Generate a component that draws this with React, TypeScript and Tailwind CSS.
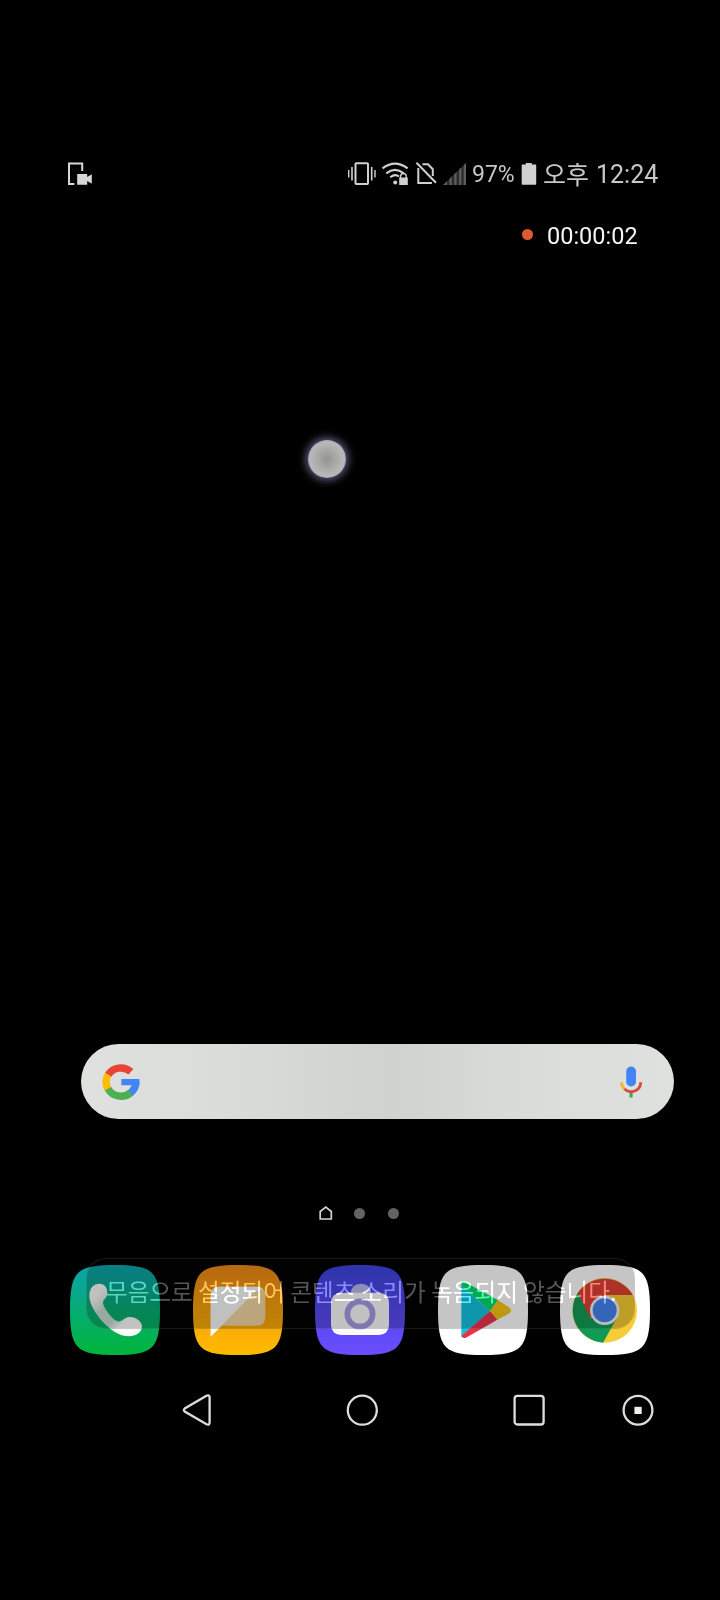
import React from "react";

const SQUIRCLE =
  "M45 0 C63 0 75.500 1.500 82 8 C88.500 14.500 90 27 90 45 C90 63 88.500 75.500 82 82 C75.500 88.500 63 90 45 90 C27 90 14.500 88.500 8 82 C1.500 75.500 0 63 0 45 C0 27 1.500 14.500 8 8 C14.500 1.500 27 0 45 0Z";

function AppIcon({ x, id, top, bottom, children }: { x: number; id: string; top: string; bottom: string; children: React.ReactNode }) {
  return (
    <svg className="h-[90px] w-[90px] shrink-0" viewBox={`${x} 45 270 270`}>
      <defs>
        <linearGradient id={id} x1="0" y1="0" x2="0" y2="1">
          <stop offset="0" stopColor={top} />
          <stop offset="1" stopColor={bottom} />
        </linearGradient>
      </defs>
      <path d={SQUIRCLE} transform={`translate(${x} 45) scale(3)`} fill={`url(#${id})`} />
      {children}
    </svg>
  );
}

function StatusBar() {
  return (
    <header className="flex h-[24px] items-center pl-[68px]">
      <svg className="h-6 w-6 shrink-0" viewBox="0 0 24 24">
        <path d="M14.2 9V1.6H1V21.9H6.4" fill="none" stroke="#d6d8d6" strokeWidth="2" />
        <path d="M9.2 12h10v3l4.6-2.8v9.6L19.200 19v3.800h-10z" fill="#d6d8d6" />
      </svg>
      <svg className="ml-[255px] h-6 w-[120px] shrink-0" viewBox="347 162 120 24">
        <g fill="none" stroke="#cfd1cf" strokeWidth="2">
          <rect x="355.500" y="163.300" width="12.500" height="20.700" rx="0.8" strokeWidth="2" />
          <path d="M352 167v13.500M371.700 167v13.500" strokeWidth="1.600" />
          <path d="M348.700 170v7.500M375 170v7.500" strokeWidth="1.400" />
          <path d="M382.500 168.400Q395 158.800 407.600 168.400M386.300 173.300Q395 166.500 403.700 173.300" strokeWidth="2.200" />
          <path d="M390.300 177.300Q395 173.500 399 176.500" strokeWidth="2.100" />
          <path d="M400.600 178.500v-2.200a2.800 2.800 0 0 1 5.600 0v2.200" strokeWidth="1.400" />
          <path d="M416.500 162.800L436 182.800M422.500 164.200h5.500l4.800 5v6.800M418.300 168v14.900h13.600" strokeWidth="2" />
        </g>
        <circle cx="395.200" cy="182.500" r="2" fill="#cfd1cf" />
        <rect x="399.200" y="177.500" width="8.600" height="7.500" fill="#cfd1cf" />
        <path d="M443 185L466 163V185Z" fill="#2a2b2a" />
        <path d="M443 185l4-3.800v3.800zM449.500 185v-6.200l2.300-2.200v8.400zM454.300 185v-10.800l2.300-2.200v13zM459.100 185v-15.400l2.300-2.200v17.600zM463.700 185v-19.800l2.300-2.200v22z" fill="#5c5e5c" />
      </svg>
      <span className="relative top-px ml-[5px] w-[45px] whitespace-nowrap font-['Roboto',sans-serif] text-[23px] leading-6 text-[#c6c8c6]">97%</span>
      <svg className="ml-[4px] h-6 w-4 shrink-0" viewBox="0 0 16 24">
        <path d="M4.800 1h6v1.500H14.500a.7.7 0 0 1 .7.7V22a.8.8 0 0 1-.8.8H1.500a.8.8 0 0 1-.8-.8V3.200a.7.7 0 0 1 .7-.7H4.800z" fill="#cfd1cf" />
      </svg>
      <span className="relative -top-px ml-[6px] w-[53px] whitespace-nowrap font-['Noto_Sans_CJK_KR',sans-serif] text-[25px] leading-6 text-[#c6c8c6]">오후</span>
      <span className="relative top-px whitespace-nowrap font-['Roboto',sans-serif] text-[25px] leading-6 text-[#c6c8c6]">12:24</span>
    </header>
  );
}

function SearchBar() {
  return (
    <div className="ml-[81px] mt-[796px] flex h-[75px] w-[593px] items-center justify-between rounded-full bg-[linear-gradient(90deg,#dfe1df,#dadcda_25%,#d0d2d0_52%,#dadcda_75%,#dfe1df)] pl-[21px] pr-[32px]">
      <svg className="h-[36px] w-[38px]" viewBox="0 0 38 36" preserveAspectRatio="none">
        <g fill="none" strokeWidth="7.400">
          <path d="M28.900 7.700A14.900 14.400 0 0 0 6 11.100" stroke="#e94335" />
          <path d="M6.200 10.700A14.900 14.400 0 0 0 6.200 25.100" stroke="#fbbc05" />
          <path d="M6 24.700A14.900 14.400 0 0 0 28.900 28.600" stroke="#4caf50" />
          <path d="M28.500 28.900A14.900 14.400 0 0 0 34 18.200" stroke="#4285f4" />
        </g>
        <path d="M19.300 15H37.300Q37.700 18 37.200 21.200H19.300z" fill="#4285f4" />
      </svg>
      <svg className="h-[32px] w-[22px]" viewBox="0 0 22 32">
        <rect x="6.200" y="0.500" width="9.800" height="20" rx="4.900" fill="#4285f4" />
        <path d="M9.600 25h3v6.500h-3z" fill="#34a853" />
        <path d="M1.500 16.300Q1.600 20.500 4.700 23.300" fill="none" stroke="#f3b72c" strokeWidth="2.800" />
        <path d="M4.500 23.100C10 28.300 20.700 25.200 20.700 16.300" fill="none" stroke="#d34b3d" strokeWidth="2.800" />
      </svg>
    </div>
  );
}

function Dock() {
  return (
    <div className="relative mt-[45px] h-[90px]">
      <div className="flex h-[90px] gap-[32.500px] pl-[70px]">
        <AppIcon x={30} id="phone" top="#0ca3ad" bottom="#00b53a">
          <defs>
            <linearGradient id="handset" gradientUnits="userSpaceOnUse" x1="118" y1="130" x2="215" y2="235">
              <stop offset="0" stopColor="#f8faf8" />
              <stop offset="0.300" stopColor="#c6dbd0" />
              <stop offset="0.620" stopColor="#c6dbd0" />
              <stop offset="0.800" stopColor="#fafcfa" />
            </linearGradient>
          </defs>
          <path d="M88 138C88 115 100 101 118 101C134 101 142 113 142 130C142 145 129 148 129 158C129 170 155 207 171 213C184 220 191 202 208 201C226 199 246 215 246 229C246 248 227 259 207 259C151 259 88 178 88 138Z" fill="url(#handset)" />
        </AppIcon>
        <AppIcon x={399} id="message" top="#ef8715" bottom="#ffbb00">
          <path d="M452 260V138Q452 110 480 110H590Q616 110 616 138V200Q616 227 588 227H485Z" fill="#f3d6a2" />
          <path d="M452 260V138Q452 110 480 110H590Q602 110 609 118Q590 119 572 138Z" fill="#f8fafa" />
        </AppIcon>
        <AppIcon x={45} id="camera" top="#3b43df" bottom="#6b4dff">
          <path d="M152 132Q154 101 183 101Q212 101 214 132Z" fill="#b9b8ef" />
          <rect x="93" y="128" width="174" height="127" rx="29" fill="#fafafa" />
          <circle cx="180" cy="192" r="38" fill="none" stroke="#a29be3" strokeWidth="17" />
        </AppIcon>
        <AppIcon x={414} id="play" top="#fff" bottom="#fff">
          <path d="M484 105L570 183L484 260Z" fill="#12c4df" />
          <path d="M484 105Q484 90 499 98L594 151L570 183Z" fill="#00d86c" />
          <path d="M594 151L626 171Q640 182 626 191L592 209L570 183Z" fill="#f7c414" />
          <path d="M592 209L498 263Q488 267 484 258L570 183Z" fill="#e9334b" />
        </AppIcon>
        <AppIcon x={120} id="chrome" top="#fff" bottom="#fff">
          <circle cx="254" cy="181" r="97" fill="#f8cc35" />
          <path d="M254 181L212 205L177 124A97 97 0 0 0 249 278L291 203Z" fill="#109b55" />
          <path d="M173 130A97 97 0 0 1 338 135H254L212 205Z" fill="#df3f33" />
          <circle cx="254" cy="181" r="44" fill="#f1f3f7" />
          <circle cx="254" cy="181" r="36" fill="#4383ee" />
        </AppIcon>
      </div>
      <div className="absolute left-[86px] top-[-7px] h-[71px] w-[549px] rounded-[20px] border border-white/10 bg-[#050505]/[0.23]" />
      <p className="absolute left-[106px] top-[8px] whitespace-nowrap font-['Noto_Sans_CJK_KR',sans-serif] text-[23.600px] font-normal leading-[36px] text-[#555555] mix-blend-plus-lighter">
        무음으로 설정되어 콘텐츠 소리가 녹음되지 않습니다.
      </p>
    </div>
  );
}

function NavigationBar() {
  return (
    <nav className="mt-[38px] flex h-[34px] items-center pl-[181px]">
      <svg className="h-[34px] w-[31px]" viewBox="0 0 31 34" fill="none" stroke="#deded9" strokeWidth="2.300">
        <path d="M25.500 2.700L3.700 15.500Q2 17 3.700 18.500L25.500 31.300Q28.600 32.500 28.600 29.500V4.500Q28.600 1.500 25.500 2.700Z" />
      </svg>
      <svg className="ml-[133px] h-[34px] w-[34px]" viewBox="0 0 34 34" fill="none" stroke="#deded9" strokeWidth="2.300">
        <circle cx="17.300" cy="17.200" r="14.500" />
      </svg>
      <svg className="ml-[133px] h-[34px] w-[34px]" viewBox="0 0 34 34" fill="none" stroke="#deded9" strokeWidth="2.300">
        <rect x="2.600" y="2.800" width="29" height="28.700" rx="2.800" />
      </svg>
      <svg className="ml-[75px] h-[34px] w-[34px]" viewBox="0 0 34 34">
        <circle cx="17" cy="17.200" r="14.400" fill="none" stroke="#deded9" strokeWidth="2.300" />
        <path d="M13.400 13.800h7.300v7.200h-7.300z" fill="#eeeeea" />
      </svg>
    </nav>
  );
}

export default function App() {
  return (
    <main className="relative flex h-[1600px] w-[720px] flex-col overflow-hidden bg-black pt-[162px]">
      <StatusBar />
      <div className="mt-[36px] flex h-[26px] items-center pl-[522px]">
        <span className="mb-[2px] h-[11px] w-[11px] rounded-full bg-[#df5a31]" />
        <span className="ml-[14px] pt-px whitespace-nowrap font-['Roboto',sans-serif] text-[23.500px] leading-6 text-[#f5f5f3]">00:00:02</span>
      </div>
      <SearchBar />
      <div className="mt-[87px] flex h-[14px] items-center pl-[319px]">
        <svg className="h-[14px] w-[14px]" viewBox="0 0 14 14" fill="none" stroke="#d2d4d2" strokeWidth="1.700">
          <path d="M1.200 5.500L6.800 1.200L12.300 5.500V13H1.200Z" />
        </svg>
        <span className="ml-[21px] h-[11px] w-[11px] rounded-full bg-[#626462]" />
        <span className="ml-[23px] h-[11px] w-[11px] rounded-full bg-[#626462]" />
      </div>
      <Dock />
      <NavigationBar />
      <div className="absolute left-[308px] top-[440px] h-[38px] w-[38px] rounded-full bg-[radial-gradient(circle,#949591_0%,#a9aaa6_35%,#b8b8b8_62%,#aaa9c6_71%)] shadow-[0_0_8px_2px_rgba(135,133,180,0.75)]" />
    </main>
  );
}
